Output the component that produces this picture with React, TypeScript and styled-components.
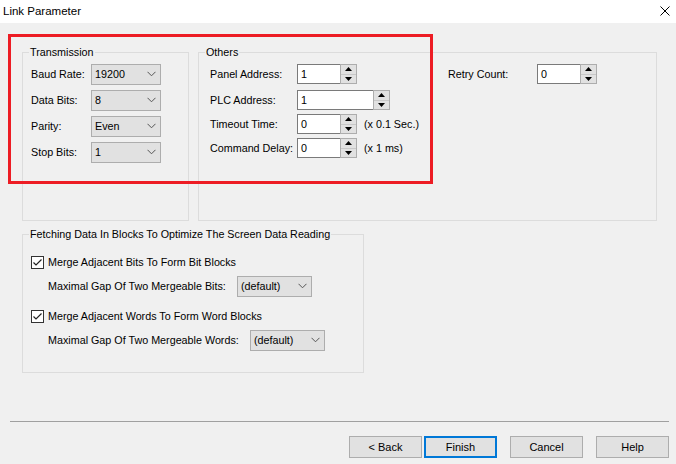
import React from "react";
import styled, { createGlobalStyle } from "styled-components";

const GlobalStyle = createGlobalStyle`
  html, body { margin: 0; padding: 0; background: #f0f0f0; }
  body { font-family: "Liberation Sans", Arial, sans-serif; font-size: 10.75px; color: #000; }
  * { box-sizing: border-box; }
`;

const Window = styled.div`
  position: relative;
  width: 676px;
  height: 464px;
  background: #f0f0f0;
  display: flex;
  flex-direction: column;
  overflow: hidden;
`;

const TitleBar = styled.div`
  height: 23px;
  background: #fff;
  display: flex;
  align-items: center;
  justify-content: space-between;
  padding: 0 6px 1px 3px;
  font-family: "Liberation Sans", Arial, sans-serif;
  font-size: 11.5px;
`;

const CloseIcon = styled.svg`
  width: 10px;
  height: 10px;
`;

const Body = styled.div`
  display: flex;
  flex-direction: column;
  padding: 23px 7px 0 22px;
`;

const TopRow = styled.div`
  display: flex;
  gap: 9px;
`;

const Group = styled.fieldset<{ $w: number; $h: number }>`
  margin: 0;
  padding: 0;
  width: ${(p) => p.$w}px;
  height: ${(p) => p.$h}px;
  border: 1px solid #dcdcdc;
  min-width: 0;
`;

const Legend = styled.legend`
  margin-left: 6px;
  padding: 0 1px;
  font-size: 10.75px;
  line-height: 13px;
  height: 13px;
`;

const GroupBody = styled.div<{ $pl: number; $pt: number }>`
  padding-left: ${(p) => p.$pl}px;
  padding-top: ${(p) => p.$pt}px;
`;

const FormGrid = styled.div`
  display: grid;
  grid-template-columns: 60px 70px;
  row-gap: 5px;
  align-items: center;
`;

const Label = styled.span<{ $w?: number }>`
  display: inline-block;
  width: ${(p) => (p.$w ? `${p.$w}px` : "auto")};
  white-space: nowrap;
  line-height: 13px;
`;

const ComboBox = styled.div<{ $w: number }>`
  width: ${(p) => p.$w}px;
  height: 21px;
  background: #e1e1e1;
  border: 1px solid #adadad;
  display: flex;
  align-items: center;
  justify-content: space-between;
  padding: 0 4px 1px 3px;
`;

const Chevron = () => (
  <svg width="9" height="6" viewBox="0 0 9 6">
    <polyline points="0.5,0.8 4.5,4.8 8.5,0.8" fill="none" stroke="#555" strokeWidth="1" />
  </svg>
);

const Combo = ({ value, w }: { value: string; w: number }) => (
  <ComboBox $w={w}>
    <span>{value}</span>
    <Chevron />
  </ComboBox>
);

const OthersLayout = styled.div`
  display: flex;
`;

const OthersCol = styled.div<{ $w?: number }>`
  display: flex;
  flex-direction: column;
  width: ${(p) => (p.$w ? `${p.$w}px` : "auto")};
`;

const FieldRow = styled.div<{ $mb?: number }>`
  display: flex;
  align-items: center;
  height: 20px;
  margin-bottom: ${(p) => p.$mb ?? 0}px;
`;

const SpinBox = styled.div<{ $w: number }>`
  display: flex;
  width: ${(p) => p.$w}px;
  height: 20px;
`;

const SpinText = styled.div`
  flex: 1;
  background: #fff;
  border: 1px solid #7a7a7a;
  border-right: none;
  padding: 0 0 0 3px;
  display: flex;
  align-items: center;
`;

const SpinButtons = styled.div`
  width: 17px;
  display: flex;
  flex-direction: column;
  border: 1px solid #adadad;
  background: #e1e1e1;
`;

const SpinHalf = styled.div<{ $top?: boolean }>`
  flex: 1;
  display: flex;
  align-items: center;
  justify-content: center;
  border-bottom: ${(p) => (p.$top ? "1px solid #c8c8c8" : "none")};
`;

const Spin = ({ value, w }: { value: string; w: number }) => (
  <SpinBox $w={w}>
    <SpinText>{value}</SpinText>
    <SpinButtons>
      <SpinHalf $top>
        <svg width="7" height="4" viewBox="0 0 7 4">
          <polygon points="0,4 7,4 3.5,0" fill="#000" />
        </svg>
      </SpinHalf>
      <SpinHalf>
        <svg width="7" height="4" viewBox="0 0 7 4">
          <polygon points="0,0 7,0 3.5,4" fill="#000" />
        </svg>
      </SpinHalf>
    </SpinButtons>
  </SpinBox>
);

const Suffix = styled.span`
  margin-left: 7px;
  white-space: nowrap;
`;

const FetchGroupWrap = styled.div`
  margin-top: 7px;
`;

const CheckRow = styled.div<{ $mt: number }>`
  display: flex;
  align-items: center;
  height: 16px;
  margin-top: ${(p) => p.$mt}px;
  gap: 4px;
`;

const CheckBox = styled.div`
  width: 13px;
  height: 13px;
  background: #fff;
  border: 1px solid #333;
  display: flex;
  align-items: center;
  justify-content: center;
`;

const SubRow = styled.div<{ $mt: number }>`
  display: flex;
  align-items: center;
  height: 21px;
  margin-top: ${(p) => p.$mt}px;
  padding-left: 17px;
`;

const Check = ({ label, mt }: { label: string; mt: number }) => (
  <CheckRow $mt={mt}>
    <CheckBox>
      <svg width="11" height="11" viewBox="0 0 11 11">
        <polyline points="1.5,5.5 4,8 9.5,2.5" fill="none" stroke="#222" strokeWidth="1.2" />
      </svg>
    </CheckBox>
    <Label>{label}</Label>
  </CheckRow>
);

const Separator = styled.div`
  height: 1px;
  background: #a0a0a0;
  margin: 48px 0 0 -12px;
`;

const ButtonRow = styled.div`
  display: flex;
  justify-content: flex-end;
  margin-top: 14px;
`;

const Button = styled.div<{ $primary?: boolean; $ml: number }>`
  width: 73px;
  height: 22px;
  margin-left: ${(p) => p.$ml}px;
  background: #e1e1e1;
  border: ${(p) => (p.$primary ? "2px solid #0078d7" : "1px solid #adadad")};
  display: flex;
  align-items: center;
  justify-content: center;
  font-size: 11px;
  padding-bottom: 1px;
`;

const Annotation = styled.div`
  position: absolute;
  left: 8px;
  top: 34px;
  width: 425px;
  height: 150px;
  border: 3px solid #ed1c24;
  pointer-events: none;
`;

export default function App() {
  return (
    <>
      <GlobalStyle />
      <Window>
        <TitleBar>
          <span>Link Parameter</span>
          <CloseIcon viewBox="0 0 10 10">
            <line x1="0.5" y1="0.5" x2="9.5" y2="9.5" stroke="#000" strokeWidth="1" />
            <line x1="9.5" y1="0.5" x2="0.5" y2="9.5" stroke="#000" strokeWidth="1" />
          </CloseIcon>
        </TitleBar>
        <Body>
          <TopRow>
            <Group $w={167} $h={175}>
              <Legend>Transmission</Legend>
              <GroupBody $pl={8} $pt={5}>
                <FormGrid>
                  <Label>Baud Rate:</Label>
                  <Combo value="19200" w={70} />
                  <Label>Data Bits:</Label>
                  <Combo value="8" w={70} />
                  <Label>Parity:</Label>
                  <Combo value="Even" w={70} />
                  <Label>Stop Bits:</Label>
                  <Combo value="1" w={70} />
                </FormGrid>
              </GroupBody>
            </Group>
            <Group $w={459} $h={175}>
              <Legend>Others</Legend>
              <GroupBody $pl={11} $pt={5}>
                <OthersLayout>
                  <OthersCol $w={238}>
                    <FieldRow $mb={6}>
                      <Label $w={87}>Panel Address:</Label>
                      <Spin value="1" w={60} />
                    </FieldRow>
                    <FieldRow $mb={4}>
                      <Label $w={87}>PLC Address:</Label>
                      <Spin value="1" w={93} />
                    </FieldRow>
                    <FieldRow $mb={4}>
                      <Label $w={87}>Timeout Time:</Label>
                      <Spin value="0" w={60} />
                      <Suffix>(x 0.1 Sec.)</Suffix>
                    </FieldRow>
                    <FieldRow>
                      <Label $w={87}>Command Delay:</Label>
                      <Spin value="0" w={60} />
                      <Suffix>(x 1 ms)</Suffix>
                    </FieldRow>
                  </OthersCol>
                  <OthersCol>
                    <FieldRow>
                      <Label $w={89}>Retry Count:</Label>
                      <Spin value="0" w={60} />
                    </FieldRow>
                  </OthersCol>
                </OthersLayout>
              </GroupBody>
            </Group>
          </TopRow>
          <FetchGroupWrap>
            <Group $w={342} $h={145}>
              <Legend>Fetching Data In Blocks To Optimize The Screen Data Reading</Legend>
              <GroupBody $pl={8} $pt={0}>
                <Check mt={13} label="Merge Adjacent Bits To Form Bit Blocks" />
                <SubRow $mt={6}>
                  <Label $w={189}>Maximal Gap Of Two Mergeable Bits:</Label>
                  <Combo value="(default)" w={75} />
                </SubRow>
                <Check mt={11} label="Merge Adjacent Words To Form Word Blocks" />
                <SubRow $mt={6}>
                  <Label $w={202}>Maximal Gap Of Two Mergeable Words:</Label>
                  <Combo value="(default)" w={75} />
                </SubRow>
              </GroupBody>
            </Group>
          </FetchGroupWrap>
          <Separator />
          <ButtonRow>
            <Button $ml={0}>&lt; Back</Button>
            <Button $ml={2} $primary>Finish</Button>
            <Button $ml={13}>Cancel</Button>
            <Button $ml={13}>Help</Button>
          </ButtonRow>
        </Body>
        <Annotation />
      </Window>
    </>
  );
}
